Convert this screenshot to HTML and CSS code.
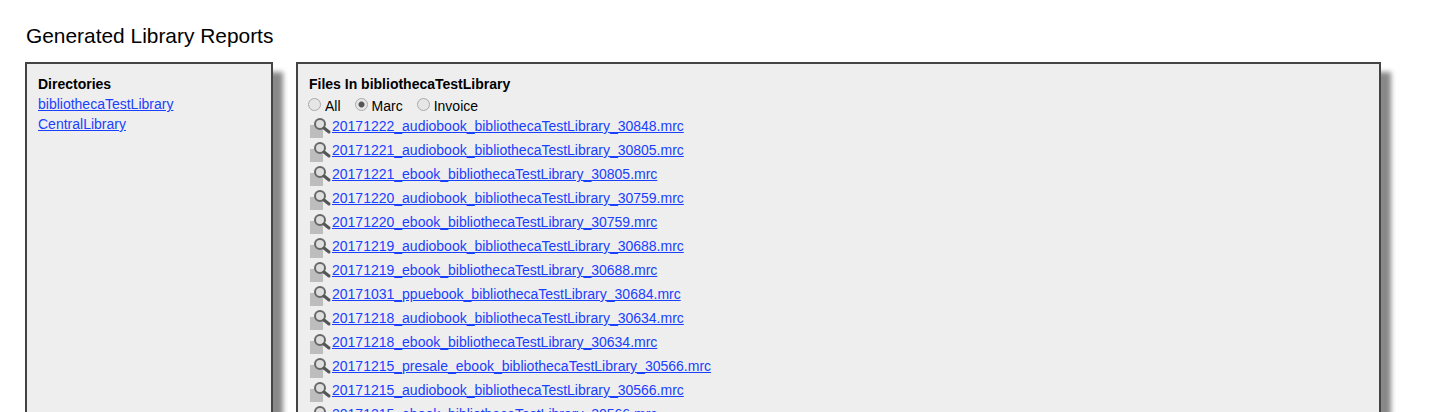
FILE: index.html
```html
<!DOCTYPE html>
<html lang="en">
<head>
    <meta charset="UTF-8">
    <title>Generated Library Reports</title>
    <link rel="stylesheet" href="styles.css">
</head>
<body>
    <h1 class="title">Generated Library Reports</h1>

    <svg class="defs" width="0" height="0">
        <symbol id="preview" viewBox="0 0 22 24">
            <path d="M0 7h13v13H0z" fill="#bdbdbd"/>
            <circle cx="10" cy="6" r="5" fill="#dedede" stroke="#686868" stroke-width="2"/>
            <path d="M14 10l5 4" stroke="#555" stroke-width="3" stroke-linecap="round"/>
        </symbol>
    </svg>

    <main class="main">
        <section class="panel dirs">
            <h2>Directories</h2>
            <a href="#">bibliothecaTestLibrary</a>
            <a href="#">CentralLibrary</a>
        </section>

        <section class="panel files">
            <h2>Files In bibliothecaTestLibrary</h2>
            <form class="filter">
                <label><input type="radio" name="type">All</label>
                <label><input type="radio" name="type" checked>Marc</label>
                <label><input type="radio" name="type">Invoice</label>
            </form>
            <ul class="file-list">
                <li><svg class="icon"><use href="#preview"/></svg><a href="#">20171222_audiobook_bibliothecaTestLibrary_30848.mrc</a></li>
                <li><svg class="icon"><use href="#preview"/></svg><a href="#">20171221_audiobook_bibliothecaTestLibrary_30805.mrc</a></li>
                <li><svg class="icon"><use href="#preview"/></svg><a href="#">20171221_ebook_bibliothecaTestLibrary_30805.mrc</a></li>
                <li><svg class="icon"><use href="#preview"/></svg><a href="#">20171220_audiobook_bibliothecaTestLibrary_30759.mrc</a></li>
                <li><svg class="icon"><use href="#preview"/></svg><a href="#">20171220_ebook_bibliothecaTestLibrary_30759.mrc</a></li>
                <li><svg class="icon"><use href="#preview"/></svg><a href="#">20171219_audiobook_bibliothecaTestLibrary_30688.mrc</a></li>
                <li><svg class="icon"><use href="#preview"/></svg><a href="#">20171219_ebook_bibliothecaTestLibrary_30688.mrc</a></li>
                <li><svg class="icon"><use href="#preview"/></svg><a href="#">20171031_ppuebook_bibliothecaTestLibrary_30684.mrc</a></li>
                <li><svg class="icon"><use href="#preview"/></svg><a href="#">20171218_audiobook_bibliothecaTestLibrary_30634.mrc</a></li>
                <li><svg class="icon"><use href="#preview"/></svg><a href="#">20171218_ebook_bibliothecaTestLibrary_30634.mrc</a></li>
                <li><svg class="icon"><use href="#preview"/></svg><a href="#">20171215_presale_ebook_bibliothecaTestLibrary_30566.mrc</a></li>
                <li><svg class="icon"><use href="#preview"/></svg><a href="#">20171215_audiobook_bibliothecaTestLibrary_30566.mrc</a></li>
                <li><svg class="icon"><use href="#preview"/></svg><a href="#">20171215_ebook_bibliothecaTestLibrary_30566.mrc</a></li>
            </ul>
        </section>
    </main>
</body>
</html>
```

FILE: styles.css
```css
html, body {
    height: 412px;
    overflow: hidden;
}

body {
    margin: 0;
    padding: 24px 0 0 25px;
    box-sizing: border-box;
    font-family: "Liberation Sans", Arial, sans-serif;
    font-size: 14px;
    color: #000;
    background-color: #fff;
}

a {
    color: #1a40ff;
}

.title {
    margin: 0 0 15px 1px;
    font-size: 20.9px;
    font-weight: normal;
    line-height: 23px;
}

.defs {
    position: absolute;
}

.main {
    display: flex;
    align-items: flex-start;
    gap: 23px;
}

.panel {
    box-sizing: border-box;
    height: 500px;
    padding: 12px;
    background-color: #eee;
    border: 2px solid #444;
    box-shadow: 10px 10px 5px #888;
}

.panel h2 {
    margin: 0;
    font-size: 14px;
    line-height: 16px;
}

.dirs {
    width: 248px;
    padding-left: 11px;
}

.dirs a {
    display: block;
    margin-top: 4px;
    line-height: 16px;
}

.files {
    width: 1085px;
    padding-left: 11px;
}

.filter {
    display: flex;
    gap: 14px;
    height: 20px;
    align-items: center;
    margin: 4px 0 2px -1px;
}

.filter label {
    display: flex;
    align-items: center;
}

.filter input {
    appearance: none;
    box-sizing: border-box;
    width: 13px;
    height: 13px;
    margin: 0 4px 4px 0;
    border: 1px solid #a9a9a9;
    border-radius: 50%;
    background-color: #e6e6e6;
}

.filter input:checked {
    background: radial-gradient(circle, #555 0, #555 2.5px, #e6e6e6 3.5px);
}

.file-list {
    margin: 0;
    padding: 0;
    list-style: none;
}

.file-list li {
    display: flex;
    height: 24px;
    line-height: 16px;
}

.icon {
    width: 22px;
    height: 24px;
    margin-left: 1px;
    flex: none;
}
```
